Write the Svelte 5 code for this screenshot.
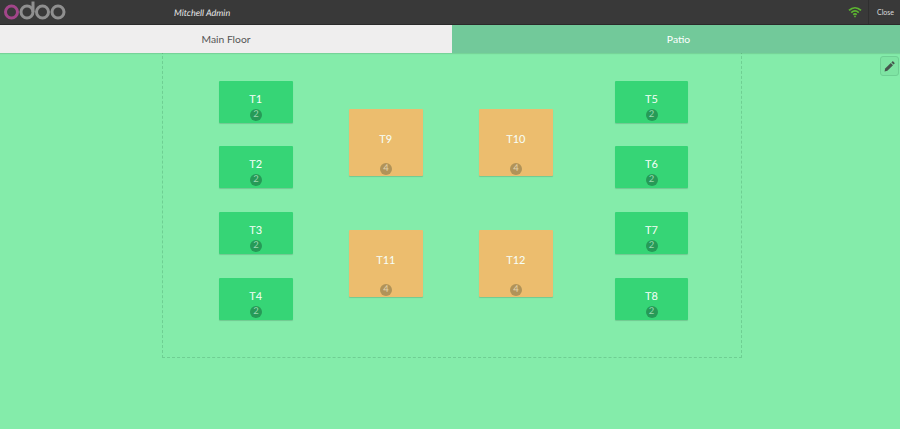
<script>
	const tables = [
		{ name: 'T1', x: 219, y: 81, h: 42, seats: 2, color: 'green' },
		{ name: 'T2', x: 219, y: 146, h: 42, seats: 2, color: 'green' },
		{ name: 'T3', x: 219, y: 212, h: 42, seats: 2, color: 'green' },
		{ name: 'T4', x: 219, y: 278, h: 42, seats: 2, color: 'green' },
		{ name: 'T9', x: 349, y: 109, h: 67, seats: 4, color: 'orange' },
		{ name: 'T10', x: 479, y: 109, h: 67, seats: 4, color: 'orange' },
		{ name: 'T11', x: 349, y: 230, h: 67, seats: 4, color: 'orange' },
		{ name: 'T12', x: 479, y: 230, h: 67, seats: 4, color: 'orange' },
		{ name: 'T5', x: 614.6, y: 81, h: 42, seats: 2, color: 'green' },
		{ name: 'T6', x: 614.6, y: 146, h: 42, seats: 2, color: 'green' },
		{ name: 'T7', x: 614.6, y: 212, h: 42, seats: 2, color: 'green' },
		{ name: 'T8', x: 614.6, y: 278, h: 42, seats: 2, color: 'green' }
	];
</script>

<div class="pos">
	<header class="topbar">
		<svg class="logo" width="70" height="24" viewBox="0 0 70 24" fill="none" stroke-width="3">
			<circle cx="11.5" cy="12" r="6" stroke="#a24689" />
			<circle cx="27" cy="12" r="6" stroke="#8f8f8f" />
			<path d="M33 1.5V12" stroke="#8f8f8f" />
			<circle cx="42.5" cy="12" r="6" stroke="#8f8f8f" />
			<circle cx="58" cy="12" r="6" stroke="#8f8f8f" />
		</svg>
		<div class="cashier">Mitchell Admin</div>
		<div class="status">
			<svg width="14" height="12" viewBox="0 0 14 12" fill="none" stroke="#5cb531" stroke-width="1.7">
				<path d="M1 4.4C4.6 1 9.4 1 13 4.4" />
				<path d="M3.2 6.6C5.5 4.5 8.5 4.5 10.8 6.6" />
				<path d="M5.2 8.7C6.3 7.8 7.7 7.8 8.8 8.7" />
				<circle cx="7" cy="10.4" r="0.9" fill="#5cb531" stroke="none" />
			</svg>
		</div>
		<button class="close">Close</button>
	</header>

	<nav class="floors">
		<button class="floor">Main Floor</button>
		<button class="floor active">Patio</button>
	</nav>

	<main class="map">
		<div class="plan"></div>
		{#each tables as t}
			<div class="table {t.color}" style="left: {t.x}px; top: {t.y - 53}px; height: {t.h}px">
				<span class="label">{t.name}</span>
				<span class="seats">{t.seats}</span>
			</div>
		{/each}
		<button class="edit" aria-label="Edit">
			<svg width="11" height="11" viewBox="0 0 12 12">
				<path d="M0.6 11.4 1.3 8.3 7.4 2.2 9.8 4.6 3.7 10.7Z" fill="#46564d" />
				<path d="M8.1 1.5 9 .6C9.3.3 9.8.3 10.1.6L11.4 1.9C11.7 2.2 11.7 2.7 11.4 3L10.5 3.9Z" fill="#46564d" />
			</svg>
		</button>
	</main>
</div>

<style>
	:global(body) {
		margin: 0;
	}
	.pos {
		display: flex;
		flex-direction: column;
		width: 900px;
		height: 429px;
		overflow: hidden;
		font-family: Lato, 'Liberation Sans', sans-serif;
		background: #84ecaa;
		text-rendering: geometricPrecision;
	}
	.topbar {
		display: flex;
		align-items: center;
		flex: none;
		height: 24px;
		background: #393939;
		border-bottom: 1px solid #2a2a2a;
	}
	.logo {
		flex: none;
	}
	.cashier {
		margin-left: 104px;
		font-size: 9px;
		font-style: italic;
		color: #e8e8e8;
		flex: 1;
	}
	.status {
		display: flex;
		align-items: center;
		justify-content: center;
		width: 20px;
		margin-right: 3px;
	}
	.close {
		width: 32px;
		height: 24px;
		padding: 0 0 0 2px;
		border: 0;
		border-left: 1px solid #2f2f2f;
		background: none;
		color: #dcdcdc;
		font-family: Lato, sans-serif;
		font-size: 7px;
	}
	.floors {
		display: flex;
		flex: none;
		height: 28px;
		box-shadow: 0 1px 1px rgba(0, 0, 0, 0.1);
		position: relative;
		z-index: 1;
	}
	.floor {
		flex: none;
		width: 452px;
		padding: 0 0 1px;
		border: 0;
		background: #efeeee;
		color: #555;
		font-family: Lato, sans-serif;
		font-size: 10.3px;
	}
	.floor.active {
		width: 448px;
		padding-left: 5px;
		background: #72c99a;
		color: #fff;
	}
	.map {
		position: relative;
		flex: 1;
	}
	.plan {
		position: absolute;
		left: 162px;
		top: -2px;
		width: 578px;
		height: 305px;
		border: 1px dashed #6fcf93;
	}
	.table {
		position: absolute;
		width: 73.6px;
		border-radius: 1px;
		color: #f6fff9;
		box-shadow: 0 1px 1px rgba(0, 0, 0, 0.15);
	}
	.green {
		background: #36d576;
	}
	.orange {
		background: #ecbd6e;
	}
	.label {
		position: absolute;
		left: 0;
		right: 0;
		top: 50%;
		line-height: 18px;
		text-align: center;
		font-size: 11px;
	}
	.green .label {
		margin-top: -11px;
	}
	.orange .label {
		margin-top: -12px;
	}
	.seats {
		position: absolute;
		left: 31px;
		width: 12px;
		height: 12px;
		border-radius: 50%;
		text-align: center;
		font-size: 9.5px;
		line-height: 12px;
	}
	.green .seats {
		bottom: 2px;
		background: #269a57;
		color: #9ad8b1;
	}
	.orange .seats {
		bottom: 1px;
		background: #b19358;
		color: #e3d2ab;
	}
	.edit {
		position: absolute;
		right: 1px;
		top: 3px;
		display: flex;
		align-items: center;
		justify-content: center;
		box-sizing: border-box;
		width: 19px;
		height: 20px;
		padding: 0;
		border: 1px solid #6fd094;
		border-radius: 3px;
		background: #7ee4a3;
	}
</style>
